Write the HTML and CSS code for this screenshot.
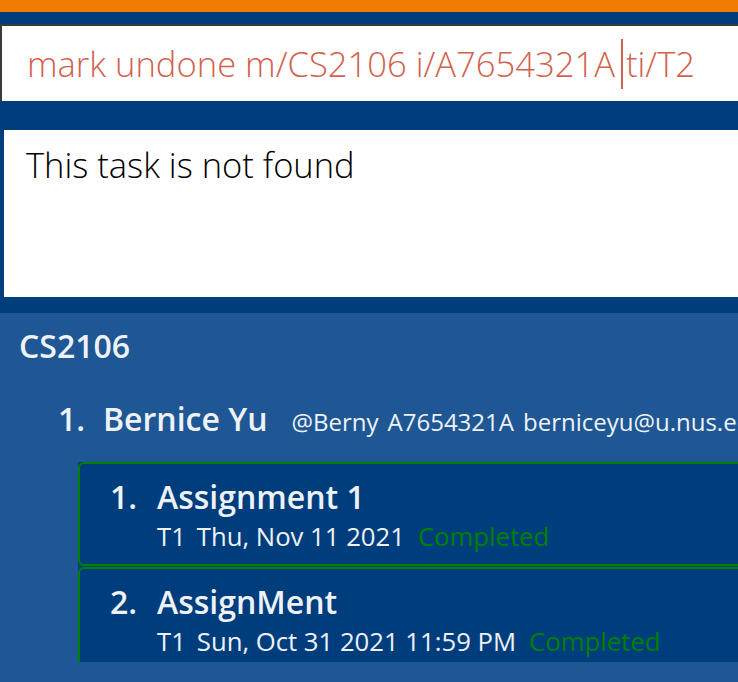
FILE: index.html
```html
<!DOCTYPE html>
<html>
<head>
<meta charset="utf-8">
<link rel="stylesheet" href="styles.css">
</head>
<body>
<div class="topbar"></div>
<div class="command-area">
  <div class="command-box"><span class="cmd">mark undone m/CS2106 i/A7654321A</span><span class="caret"></span><span class="cmd">ti/T2</span></div>
</div>
<div class="result-area">
  <div class="result-box">This task is not found</div>
</div>
<div class="list-panel">
  <div class="module-title">CS2106</div>
  <div class="person-row">
    <span class="idx">1.</span>
    <span class="pname">Bernice Yu</span>
    <span class="pinfo">@Berny</span>
    <span class="pinfo">A7654321A</span>
    <span class="pinfo">berniceyu@u.nus.edu</span>
  </div>
  <div class="tasks">
    <div class="task-card">
      <div class="task-head"><span class="tidx">1.</span><span class="tname">Assignment 1</span></div>
      <div class="task-meta"><span>T1</span><span>Thu, Nov 11 2021</span><span class="done">Completed</span></div>
    </div>
    <div class="task-card">
      <div class="task-head"><span class="tidx">2.</span><span class="tname">AssignMent</span></div>
      <div class="task-meta"><span>T1</span><span>Sun, Oct 31 2021 11:59 PM</span><span class="done">Completed</span></div>
    </div>
  </div>
</div>
</body>
</html>
```

FILE: styles.css
```css
html, body {
  margin: 0;
  padding: 0;
}
body {
  width: 738px;
  height: 682px;
  overflow: hidden;
  background: #003d7c;
  font-family: "Open Sans", "Noto Sans", sans-serif;
}
.topbar {
  height: 12px;
  background: #ef7c00;
}
.command-area {
  padding-top: 12px;
}
.command-box {
  height: 75px;
  margin-right: -20px;
  background: #fff;
  border-top: 2px solid #3a3a3a;
  border-left: 2px solid #3a3a3a;
  display: flex;
  align-items: center;
  padding-left: 25px;
  white-space: nowrap;
}
.cmd {
  color: #d2624e;
  font-size: 34.6px;
  font-weight: 300;
}
.caret {
  display: inline-block;
  width: 2px;
  height: 50px;
  background: #d2624e;
  margin: 0 3px 0 6px;
}
.result-area {
  padding: 29px 0 16px 4px;
}
.result-box {
  height: 167px;
  margin-right: -20px;
  background: #fff;
  box-sizing: border-box;
  padding: 11px 0 0 22px;
  font-size: 34.5px;
  font-weight: 300;
  color: #000;
}
.list-panel {
  background: #1e5794;
  height: 369px;
  color: #eef2f7;
  overflow: hidden;
  padding-top: 13px;
  box-sizing: border-box;
}
.module-title {
  padding-left: 19px;
  font-size: 32px;
  font-weight: 600;
  line-height: 40px;
}
.person-row {
  margin-top: 33px;
  padding-left: 58px;
  height: 40px;
  display: flex;
  align-items: baseline;
  white-space: nowrap;
}
.person-row > span {
  flex: none;
}
.idx {
  font-size: 32px;
  font-weight: 600;
  width: 45px;
  line-height: 40px;
}
.pname {
  font-size: 32px;
  font-weight: 600;
  margin-right: 24px;
  line-height: 40px;
}
.pinfo {
  font-size: 24px;
  margin-right: 9px;
}
.tasks {
  margin: 23px 0 0 78px;
  height: 200px;
  overflow: hidden;
  background: #003d7c;
}
.task-card {
  background: #003d7c;
  border: 2px solid #008000;
  border-radius: 6px;
  border-right: none;
  border-top-right-radius: 0;
  border-bottom-right-radius: 0;
  padding: 13px 0 0 30px;
  height: 104px;
  box-sizing: border-box;
  margin-bottom: 1px;
}
.task-head {
  display: flex;
  align-items: baseline;
  line-height: 40px;
}
.tidx {
  font-size: 32px;
  font-weight: 600;
  width: 47px;
  flex: none;
}
.tname {
  font-size: 32px;
  font-weight: 600;
}
.task-meta {
  margin-top: 2px;
  padding-left: 47px;
  display: flex;
  gap: 11px;
  font-size: 25.7px;
  line-height: 36px;
  white-space: nowrap;
}
.done {
  color: #008000;
  margin-left: 2px;
}
```
